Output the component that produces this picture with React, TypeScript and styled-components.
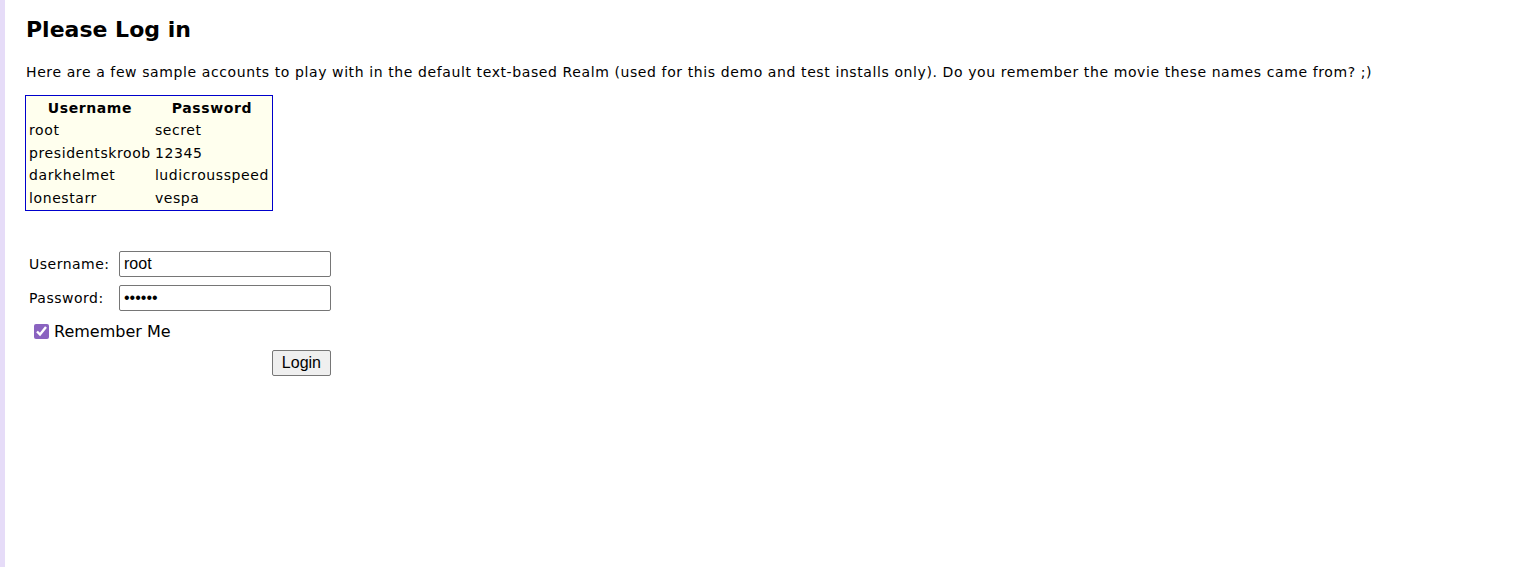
import styled, { createGlobalStyle } from "styled-components";

const Global = createGlobalStyle`
  html, body {
    margin: 0;
    padding: 0;
    background: #fff;
  }
`;

const Page = styled.div`
  min-height: 567px;
  box-sizing: border-box;
  border-left: 5px solid #e6dcf8;
  padding: 14px 0 0 21px;
  font-family: "DejaVu Sans", Verdana, sans-serif;
  color: #000;
`;

const Title = styled.h1`
  margin: 0;
  font-size: 22px;
  font-weight: bold;
  line-height: 32px;
`;

const Intro = styled.p`
  margin: 18px 0 14px;
  font-size: 14px;
  letter-spacing: 0.6px;
  line-height: 17px;
`;

const Accounts = styled.table`
  margin-left: -1px;
  border: 1px solid #0000cc;
  background: #ffffee;
  border-spacing: 2px;
  font-size: 14px;
  letter-spacing: 0.6px;
  th {
    font-weight: bold;
    padding: 1px 1px;
    line-height: 18px;
  }
  td {
    padding: 1px 1px;
    line-height: 18.5px;
  }
`;

const Form = styled.form`
  margin-top: 40px;
  padding-left: 3px;
  display: flex;
  flex-direction: column;
  width: 302px;
`;

const Field = styled.div`
  display: flex;
  align-items: center;
  height: 26px;
  margin-bottom: 8px;
`;

const Label = styled.label`
  width: 91px;
  font-size: 14px;
  letter-spacing: 0.5px;
`;

const Input = styled.input`
  box-sizing: border-box;
  width: 212px;
  height: 26px;
  border: 1px solid #767676;
  border-radius: 2px;
  padding: 1px 4px;
  font-family: "Liberation Sans", Arial, sans-serif;
  font-size: 16px;
`;

const Remember = styled.label`
  display: flex;
  align-items: center;
  gap: 5px;
  font-size: 16px;
  margin: 2px 0 0 5px;
  height: 20px;
  input {
    margin: 0;
    width: 15px;
    height: 15px;
    accent-color: #8a63c0;
  }
`;

const Submit = styled.div`
  display: flex;
  justify-content: flex-end;
  margin-top: 9px;
`;

const Button = styled.button`
  font-family: "Liberation Sans", Arial, sans-serif;
  font-size: 16px;
  height: 26px;
  padding: 0 9px;
  background: #efefef;
  border: 1px solid #767676;
  border-radius: 2px;
  color: #000;
`;

const accounts = [
  ["root", "secret"],
  ["presidentskroob", "12345"],
  ["darkhelmet", "ludicrousspeed"],
  ["lonestarr", "vespa"],
];

export default function App() {
  return (
    <Page>
      <Global />
      <Title>Please Log in</Title>
      <Intro>
        Here are a few sample accounts to play with in the default text-based Realm (used for this demo and test installs only). Do you remember the movie these names came from? ;)
      </Intro>
      <Accounts>
        <thead>
          <tr>
            <th>Username</th>
            <th>Password</th>
          </tr>
        </thead>
        <tbody>
          {accounts.map(([u, p]) => (
            <tr key={u}>
              <td>{u}</td>
              <td>{p}</td>
            </tr>
          ))}
        </tbody>
      </Accounts>
      <Form onSubmit={(e) => e.preventDefault()}>
        <Field>
          <Label>Username:</Label>
          <Input type="text" defaultValue="root" />
        </Field>
        <Field>
          <Label>Password:</Label>
          <Input type="password" defaultValue="secret" />
        </Field>
        <Remember>
          <input type="checkbox" defaultChecked />
          Remember Me
        </Remember>
        <Submit>
          <Button type="submit">Login</Button>
        </Submit>
      </Form>
    </Page>
  );
}
